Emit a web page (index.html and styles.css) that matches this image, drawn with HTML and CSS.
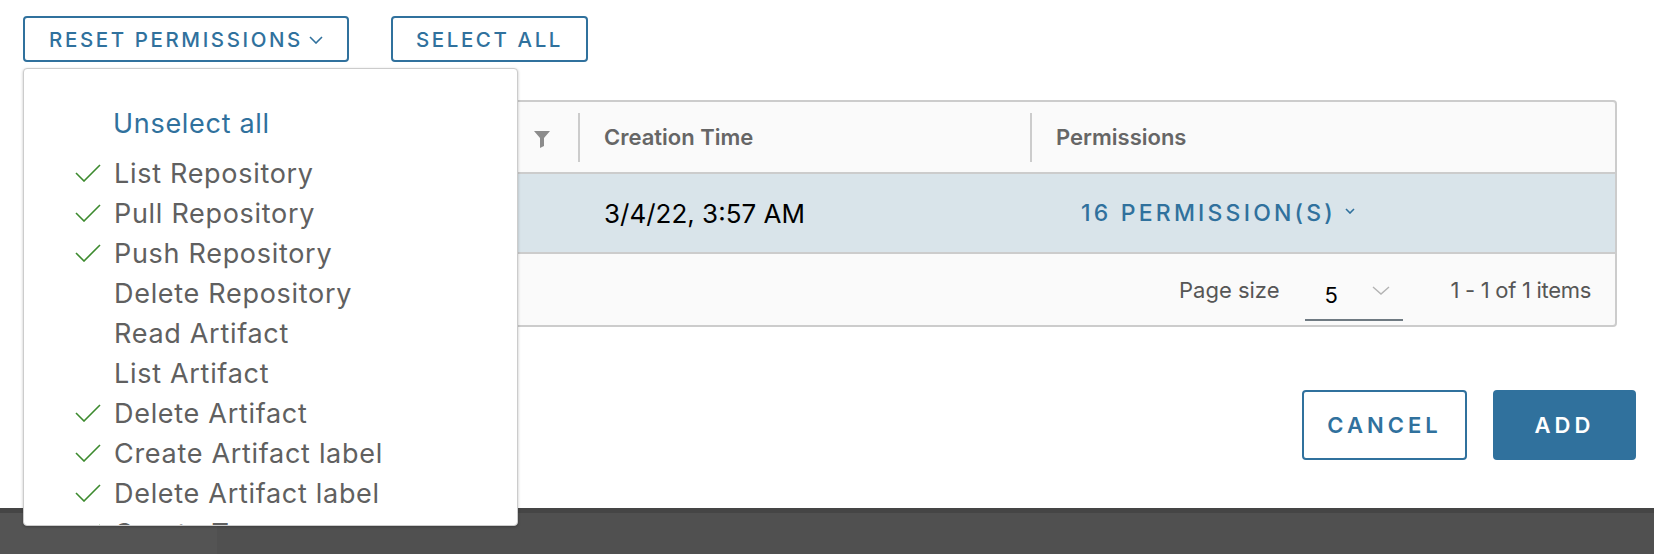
FILE: index.html
```html
<!DOCTYPE html>
<html lang="en">
<head>
<meta charset="utf-8">
<title>Robot permissions</title>
<link rel="stylesheet" href="styles.css">
</head>
<body>
<div class="modal">
  <div class="toolbar">
    <div class="reset-wrap">
      <button class="btn btn-outline btn-reset">RESET PERMISSIONS
        <svg class="caret" width="14" height="8" viewBox="0 0 14 8"><path d="M1 1 L7 7 L13 1" fill="none" stroke="#30719d" stroke-width="1.6"/></svg>
      </button>
      <div class="menu">
        <div class="menu-item unselect">Unselect all</div>
        <div class="menu-item checked"><svg class="check" width="26" height="18" viewBox="0 0 26 18"><path d="M1 9 L9 17 L25 1" fill="none" stroke="#3c8a2e" stroke-width="1.6"/></svg>List Repository</div>
        <div class="menu-item checked"><svg class="check" width="26" height="18" viewBox="0 0 26 18"><path d="M1 9 L9 17 L25 1" fill="none" stroke="#3c8a2e" stroke-width="1.6"/></svg>Pull Repository</div>
        <div class="menu-item checked"><svg class="check" width="26" height="18" viewBox="0 0 26 18"><path d="M1 9 L9 17 L25 1" fill="none" stroke="#3c8a2e" stroke-width="1.6"/></svg>Push Repository</div>
        <div class="menu-item">Delete Repository</div>
        <div class="menu-item">Read Artifact</div>
        <div class="menu-item">List Artifact</div>
        <div class="menu-item checked"><svg class="check" width="26" height="18" viewBox="0 0 26 18"><path d="M1 9 L9 17 L25 1" fill="none" stroke="#3c8a2e" stroke-width="1.6"/></svg>Delete Artifact</div>
        <div class="menu-item checked"><svg class="check" width="26" height="18" viewBox="0 0 26 18"><path d="M1 9 L9 17 L25 1" fill="none" stroke="#3c8a2e" stroke-width="1.6"/></svg>Create Artifact label</div>
        <div class="menu-item checked"><svg class="check" width="26" height="18" viewBox="0 0 26 18"><path d="M1 9 L9 17 L25 1" fill="none" stroke="#3c8a2e" stroke-width="1.6"/></svg>Delete Artifact label</div>
        <div class="menu-item checked"><svg class="check" width="26" height="18" viewBox="0 0 26 18"><path d="M1 9 L9 17 L25 1" fill="none" stroke="#3c8a2e" stroke-width="1.6"/></svg>Create Tag</div>
      </div>
    </div>
    <button class="btn btn-outline btn-select">SELECT ALL</button>
  </div>

  <div class="grid">
    <div class="grid-head">
      <div class="cell head-cell first">
        <span class="head-label"></span>
        <svg class="filter" width="16" height="17" viewBox="0 0 16 17"><path d="M0 0 H16 L10 7 V15 L6 17 V7 Z" fill="#8c8c8c"/></svg>
      </div>
      <div class="cell head-cell"><span class="sep"></span><span class="head-label">Creation Time</span></div>
      <div class="cell head-cell"><span class="sep"></span><span class="head-label">Permissions</span></div>
    </div>
    <div class="grid-row">
      <div class="cell row-cell first"></div>
      <div class="cell row-cell time">3/4/22, 3:57 AM</div>
      <div class="cell row-cell perms">
        <span class="perm-link">16 PERMISSION(S)</span>
        <svg class="perm-caret" width="10" height="6" viewBox="0 0 10 6"><path d="M1 1 L5 5 L9 1" fill="none" stroke="#30719d" stroke-width="1.6"/></svg>
      </div>
    </div>
    <div class="grid-foot">
      <span class="foot-label">Page size</span>
      <div class="page-select">
        <span class="page-value">5</span>
        <svg class="select-caret" width="18" height="9" viewBox="0 0 18 9"><path d="M1 1 L9 8 L17 1" fill="none" stroke="#b3b3b3" stroke-width="1.4"/></svg>
      </div>
      <span class="foot-label items">1 - 1 of 1 items</span>
    </div>
  </div>

  <div class="actions">
    <button class="btn btn-outline btn-cancel">CANCEL</button>
    <button class="btn btn-primary btn-add">ADD</button>
  </div>
</div>
<div class="bottom-bar"><div class="bar-left"></div></div>
</body>
</html>
```

FILE: styles.css
```css
* { box-sizing: border-box; }

html, body {
  margin: 0;
  padding: 0;
}

body {
  width: 1654px;
  height: 554px;
  overflow: hidden;
  background: #ffffff;
  font-family: "Inter", "Open Sans", "Liberation Sans", sans-serif;
  color: #565656;
}

.modal {
  height: 508px;
  padding: 16px 18px 0 23px;
  background: #ffffff;
}

.toolbar {
  display: flex;
  gap: 42px;
  align-items: flex-start;
}

.reset-wrap {
  position: relative;
}

.btn {
  font-family: "Inter", "Open Sans", "Liberation Sans", sans-serif;
  display: flex;
  align-items: center;
  justify-content: center;
  border-radius: 4px;
  cursor: pointer;
  text-transform: uppercase;
  padding: 0;
}

.btn-outline {
  background: #ffffff;
  border: 2px solid #30719d;
  color: #30719d;
}

.btn-primary {
  background: #30719d;
  border: 2px solid #30719d;
  color: #ffffff;
}

.btn-reset,
.btn-select {
  height: 46px;
  font-size: 20.5px;
  font-weight: 500;
  letter-spacing: 2.6px;
}

.btn-reset {
  width: 326px;
  gap: 6px;
}

.btn-select {
  width: 197px;
}

.caret {
  margin-top: 2px;
}

.menu {
  position: absolute;
  left: 0;
  top: 52px;
  width: 495px;
  height: 458px;
  overflow: hidden;
  background: #ffffff;
  border: 1px solid #cccccc;
  border-radius: 4px;
  box-shadow: 0 1px 3px rgba(0, 0, 0, 0.25);
  padding: 34px 0 0 0;
  z-index: 10;
}

.menu-item {
  display: flex;
  align-items: center;
  height: 40px;
  padding-left: 90px;
  font-size: 27px;
  letter-spacing: 0.7px;
  color: #606060;
  white-space: nowrap;
}

.menu-item.unselect {
  color: #30719d;
  margin-bottom: 10px;
  padding-left: 89px;
}

.check {
  margin-left: -39px;
  margin-right: 13px;
  margin-top: -1px;
  flex: none;
}

.grid {
  margin: 38px 19px 0 0;
  border: 2px solid #cccccc;
  border-radius: 4px;
  background: #fafafa;
  overflow: hidden;
}

.grid-head,
.grid-row {
  display: grid;
  grid-template-columns: 553px 452px 1fr;
}

.grid-head {
  height: 72px;
  border-bottom: 2px solid #cccccc;
}

.head-cell {
  display: flex;
  align-items: center;
  font-size: 22px;
  font-weight: 600;
  color: #666666;
}

.head-cell.first {
  justify-content: space-between;
  padding: 0 28px 0 24px;
}

.sep {
  width: 2px;
  height: 49px;
  background: #cccccc;
  flex: none;
}

.head-cell .sep + .head-label {
  padding-left: 24px;
}

.filter {
  margin-top: 4px;
}

.grid-row {
  height: 80px;
  background: #d9e4ea;
  border-bottom: 2px solid #cccccc;
}

.row-cell {
  display: flex;
  align-items: center;
  font-size: 26px;
  color: #000000;
}

.row-cell.first {
  padding-left: 24px;
}

.row-cell.time {
  padding-left: 26px;
}

.row-cell.perms {
  padding-left: 51px;
  gap: 9px;
}

.perm-link {
  color: #30719d;
  font-size: 23px;
  font-weight: 500;
  letter-spacing: 3.2px;
}

.perm-caret {
  margin-top: -4px;
}

.grid-foot {
  height: 71px;
  display: flex;
  align-items: center;
  justify-content: flex-end;
  padding-right: 24px;
}

.foot-label {
  font-size: 22px;
  color: #565656;
}

.page-select {
  display: flex;
  align-items: center;
  width: 98px;
  height: 46px;
  margin: 16px 48px 0 25px;
  padding-left: 20px;
  border-bottom: 2px solid #6f7a82;
}

.page-value {
  font-size: 22px;
  color: #000000;
  margin-top: -4px;
}

.select-caret {
  margin-left: 34px;
  margin-top: -12px;
}

.foot-label.items {
  letter-spacing: -0.3px;
}

.actions {
  display: flex;
  justify-content: flex-end;
  gap: 26px;
  margin-top: 63px;
}

.btn-cancel,
.btn-add {
  height: 70px;
  font-size: 22px;
  font-weight: 600;
  letter-spacing: 4px;
}

.btn-cancel {
  width: 165px;
}

.btn-add {
  width: 143px;
}

.bottom-bar {
  height: 46px;
  background: #505050;
  border-top: 5px solid #454545;
  display: flex;
}

.bar-left {
  width: 217px;
  background: #545454;
}
```
